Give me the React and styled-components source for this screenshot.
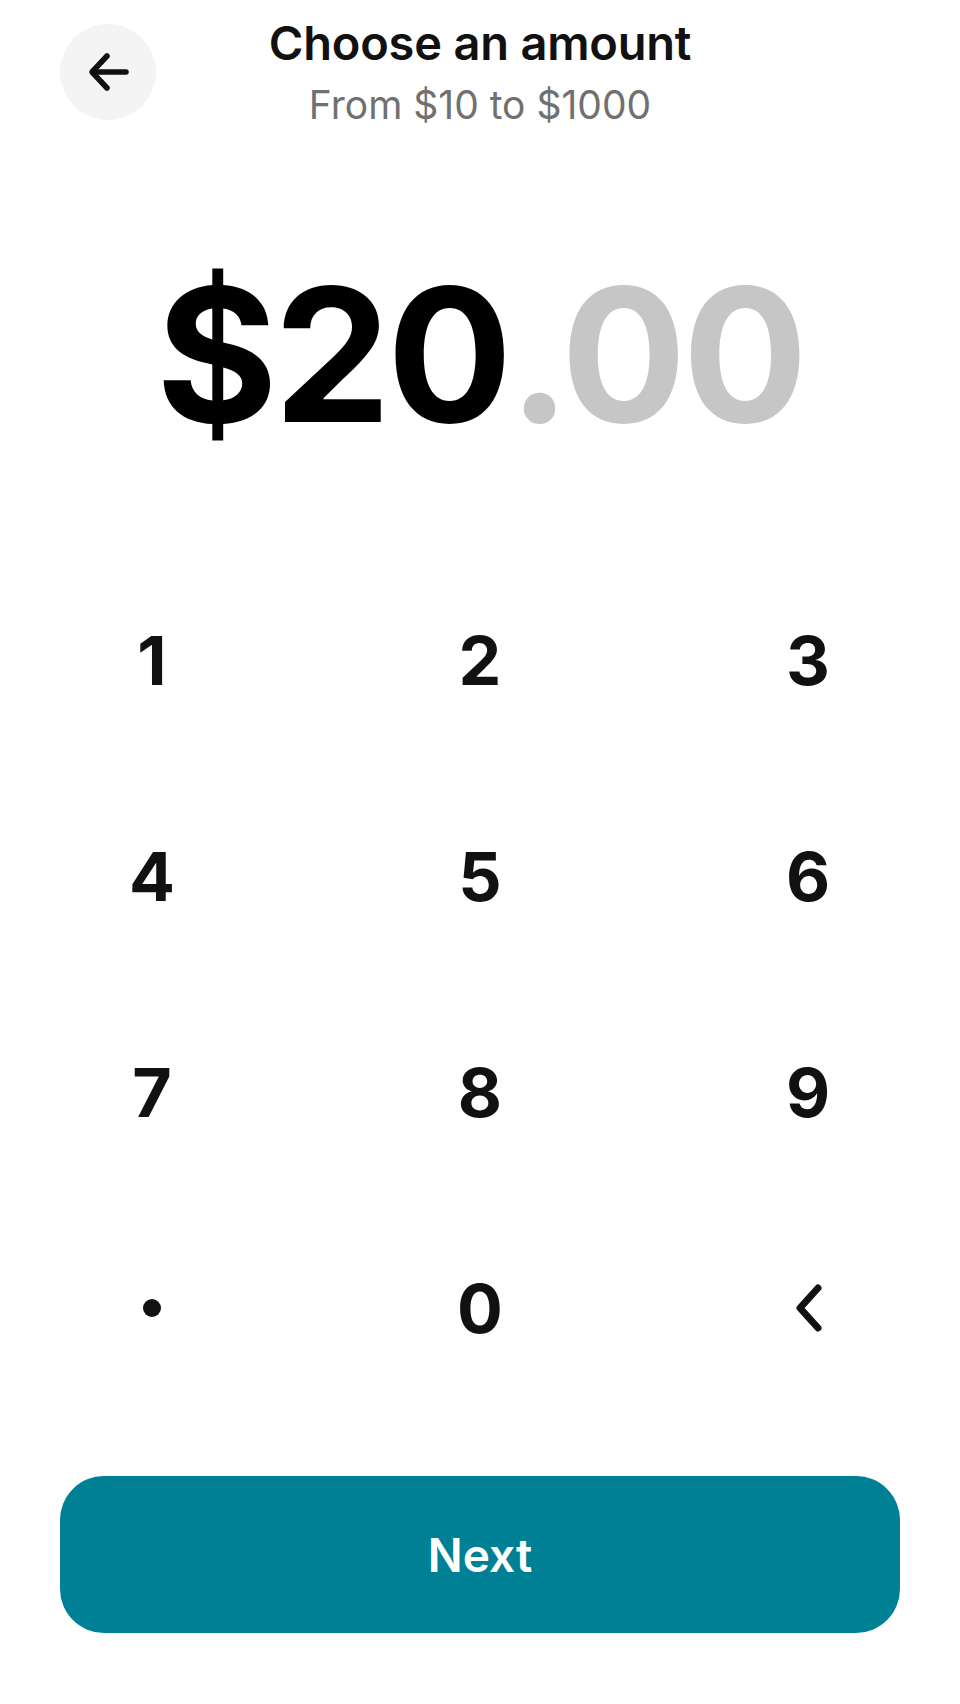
import React from "react";
import styled, { createGlobalStyle } from "styled-components";

const Global = createGlobalStyle`
  html, body { margin: 0; padding: 0; background: #ffffff; }
  body { font-family: Inter, "Noto Sans", "Liberation Sans", sans-serif; color: #111111; }
  * { box-sizing: border-box; }
`;

const Page = styled.div`
  width: 960px;
  height: 1704px;
  padding: 0 60px;
  display: flex;
  flex-direction: column;
`;

const Header = styled.header`
  margin-top: 24px;
  display: grid;
  grid-template-columns: 96px 1fr 96px;
  align-items: start;
`;

const BackButton = styled.button`
  width: 96px;
  height: 96px;
  border-radius: 50%;
  border: none;
  background: #f4f4f4;
  display: flex;
  align-items: center;
  justify-content: center;
  padding: 0;
  cursor: pointer;
`;

const TitleBlock = styled.div`
  display: flex;
  flex-direction: column;
  align-items: center;
`;

const Title = styled.h1`
  margin: -6px 0 0;
  font-size: 47px;
  line-height: 50px;
  font-weight: 600;
  color: #111111;
  letter-spacing: -0.2px;
`;

const Subtitle = styled.p`
  margin: 15px 0 0;
  font-size: 39px;
  line-height: 44px;
  font-weight: 400;
  color: #707070;
`;

const Amount = styled.div`
  margin-top: 133px;
  height: 190px;
  display: flex;
  justify-content: center;
  align-items: center;
  font-size: 186px;
  line-height: 190px;
  font-weight: 700;
  letter-spacing: -4px;
`;

const AmountPart = styled.span`
  color: ${(p) => (p.$muted ? "#c6c6c6" : "#000000")};
`;

const Keypad = styled.div`
  margin-top: 102px;
  display: grid;
  grid-template-columns: repeat(3, 184px);
  grid-auto-rows: 216px;
  justify-content: space-between;
`;

const Key = styled.button`
  border: none;
  background: transparent;
  padding: 0;
  display: flex;
  align-items: center;
  justify-content: center;
  font-family: inherit;
  font-size: 68px;
  font-weight: 700;
  color: #111111;
  cursor: pointer;
`;

const Dot = styled.span`
  width: 18px;
  height: 18px;
  border-radius: 50%;
  background: #111111;
`;

const NextButton = styled.button`
  margin-top: 60px;
  height: 157px;
  width: 100%;
  border: none;
  border-radius: 44px;
  background: #008094;
  color: #ffffff;
  font-family: inherit;
  font-size: 46px;
  font-weight: 600;
  cursor: pointer;
`;

const ArrowLeft = () => (
  <svg width="44" height="44" viewBox="0 0 44 44" fill="none" stroke="#111" strokeWidth="5.5" strokeLinecap="round" strokeLinejoin="round">
    <path d="M7 22 H40" />
    <path d="M21 6 L6 22 L21 38" />
  </svg>
);

const Backspace = () => (
  <svg width="30" height="50" viewBox="0 0 30 50" fill="none" stroke="#111" strokeWidth="7" strokeLinecap="round" strokeLinejoin="round">
    <path d="M25 5 L7 25 L25 45" />
  </svg>
);

const keys = ["1", "2", "3", "4", "5", "6", "7", "8", "9", "dot", "0", "back"];

export default function App() {
  return (
    <>
      <Global />
      <Page>
        <Header>
          <BackButton aria-label="Back">
            <ArrowLeft />
          </BackButton>
          <TitleBlock>
            <Title>Choose an amount</Title>
            <Subtitle>From $10 to $1000</Subtitle>
          </TitleBlock>
          <div />
        </Header>
        <Amount>
          <AmountPart>$20</AmountPart>
          <AmountPart $muted>.00</AmountPart>
        </Amount>
        <Keypad>
          {keys.map((k) => (
            <Key key={k}>
              {k === "dot" ? <Dot /> : k === "back" ? <Backspace /> : k}
            </Key>
          ))}
        </Keypad>
        <NextButton>Next</NextButton>
      </Page>
    </>
  );
}
